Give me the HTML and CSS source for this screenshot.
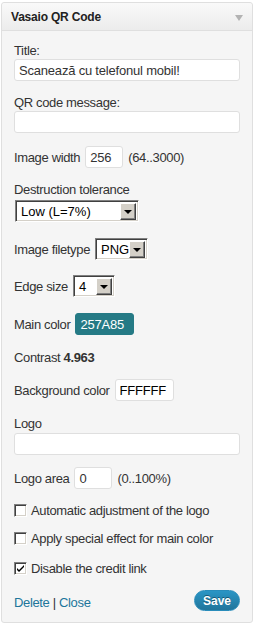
FILE: index.html
```html
<!DOCTYPE html>
<html lang="en">
<head>
    <meta charset="UTF-8">
    <title>Vasaio QR Code widget</title>
    <link rel="stylesheet" href="styles.css">
</head>
<body>
    <div class="widget">
        <div class="widget-top">
            <h3>Vasaio QR Code</h3>
            <span class="toggle"></span>
        </div>

        <div class="widget-inside">
            <div class="field">
                <label class="block">Title:</label>
                <input class="widefat" type="text" value="Scanează cu telefonul mobil!">
            </div>

            <div class="field f-message">
                <label class="block">QR code message:</label>
                <input class="widefat" type="text" value="">
            </div>

            <div class="field inline f-width">
                <label>Image width</label>
                <input class="small" type="text" value="256">
                <span>(64..3000)</span>
            </div>

            <div class="field f-tolerance">
                <label class="block">Destruction tolerance</label>
                <div class="select select-wide">
                    <span class="select-text">Low (L=7%)</span>
                    <span class="select-btn"></span>
                </div>
            </div>

            <div class="field inline f-filetype">
                <label>Image filetype</label>
                <div class="select select-type">
                    <span class="select-text">PNG</span>
                    <span class="select-btn"></span>
                </div>
            </div>

            <div class="field inline f-edge">
                <label>Edge size</label>
                <div class="select select-edge">
                    <span class="select-text">4</span>
                    <span class="select-btn"></span>
                </div>
            </div>

            <div class="field inline f-main">
                <label>Main color</label>
                <input class="color main-color" type="text" value="257A85">
            </div>

            <div class="field f-contrast">
                Contrast <b>4.963</b>
            </div>

            <div class="field inline f-bg">
                <label>Background color</label>
                <input class="color" type="text" value="FFFFFF">
            </div>

            <div class="field f-logo">
                <label class="block logo-label">Logo</label>
                <input class="widefat" type="text" value="">
            </div>

            <div class="field inline f-area">
                <label>Logo area</label>
                <input class="small" type="text" value="0">
                <span>(0..100%)</span>
            </div>

            <div class="check">
                <span class="box"></span>
                Automatic adjustment of the logo
            </div>
            <div class="check">
                <span class="box"></span>
                Apply special effect for main color
            </div>
            <div class="check check-last">
                <span class="box">
                    <svg width="9" height="9" viewBox="0 0 9 9"><path d="M1 4 L3 6 L8 1 L8 3 L3 8 L1 6 Z" fill="#000"/></svg>
                </span>
                Disable the credit link
            </div>

            <div class="widget-control">
                <div class="links">
                    <a href="#">Delete</a> | <a href="#">Close</a>
                </div>
                <button class="button-primary">Save</button>
            </div>
        </div>
    </div>
</body>
</html>
```

FILE: styles.css
```css
* {
    margin: 0;
    padding: 0;
    box-sizing: border-box;
}

body {
    font-family: 'Liberation Sans', Arial, sans-serif;
    font-size: 13px;
    letter-spacing: -0.35px;
    color: #333;
    background: #fff;
    padding: 2px 0 0 1px;
}

.widget {
    width: 252px;
    height: 621px;
    border: 1px solid #dfdfdf;
    border-radius: 3px;
    background: #f5f5f5;
}

.widget-top {
    height: 28px;
    display: flex;
    align-items: center;
    justify-content: space-between;
    padding: 0 9px 0 9px;
    background: linear-gradient(to bottom, #f9f9f9, #ececec);
    border-bottom: 1px solid #dfdfdf;
    border-radius: 3px 3px 0 0;
}

.widget-top h3 {
    font-size: 12px;
    font-weight: bold;
    letter-spacing: -0.2px;
    color: #222;
    margin-top: 1px;
}

.toggle {
    width: 0;
    height: 0;
    border-left: 4px solid transparent;
    border-right: 4px solid transparent;
    border-top: 6px solid #b3b3b3;
    margin-top: 3px;
}

.widget-inside {
    padding: 12px 11px 0 12px;
    display: flex;
    flex-direction: column;
}

/* spacing between the rows of the form */
.field {
    line-height: 15px;
}

.f-message { margin-top: 14px; }
.f-width { margin-top: 13px; }
.f-tolerance { margin-top: 14px; }
.f-filetype { margin-top: 16px; }
.f-edge { margin-top: 15px; }
.f-main { margin-top: 16px; }
.f-contrast { margin-top: 15px; }
.f-bg { margin-top: 14px; }
.f-logo { margin-top: 15px; }
.f-area { margin-top: 12px; }

.field.inline {
    display: flex;
    align-items: center;
    gap: 5px;
}

.block {
    display: block;
    margin-bottom: 1px;
}

input {
    font-family: 'Liberation Sans', Arial, sans-serif;
    font-size: 13px;
    letter-spacing: -0.2px;
    color: #333;
    height: 22px;
    background: #fff;
    border: 1px solid #dfdfdf;
    border-radius: 3px;
    padding: 0 4px;
    outline: none;
}

.widefat {
    display: block;
    width: 226px;
}

.small {
    width: 38px;
}

.color {
    width: 59px;
    color: #000;
}

.main-color {
    background: #257a85;
    border-color: #257a85;
    color: #fff;
}

.select {
    display: flex;
    align-items: center;
    height: 22px;
    background: #fff;
    border-top: 1px solid #808080;
    border-left: 1px solid #808080;
    border-right: 1px solid #fff;
    border-bottom: 1px solid #fff;
    box-shadow: inset 1px 1px 0 #404040, inset -1px -1px 0 #d4d0c8;
    padding: 2px;
    color: #000;
    letter-spacing: 0;
}

.select-text {
    flex: 1;
    padding-left: 3px;
}

.select-btn {
    width: 16px;
    height: 17px;
    background: #d4d0c8;
    border-top: 1px solid #fff;
    border-left: 1px solid #fff;
    border-right: 1px solid #404040;
    border-bottom: 1px solid #404040;
    box-shadow: inset -1px -1px 0 #808080;
    position: relative;
}

.select-btn::after {
    content: '';
    position: absolute;
    left: 3px;
    top: 6px;
    border-left: 4px solid transparent;
    border-right: 4px solid transparent;
    border-top: 4px solid #000;
}

.select-wide {
    width: 124px;
    margin-top: 3px;
    margin-left: 1px;
}

.select-type {
    width: 53px;
}

.select-edge {
    width: 42px;
}

.logo-label {
    margin-bottom: 2px;
}

.check {
    display: flex;
    align-items: center;
    gap: 4px;
    height: 13px;
    margin-top: 15px;
}

.check-last {
    margin-top: 17px;
}

.box {
    width: 13px;
    height: 13px;
    background: #fff;
    border-top: 1px solid #808080;
    border-left: 1px solid #808080;
    border-right: 1px solid #fff;
    border-bottom: 1px solid #fff;
    box-shadow: inset 1px 1px 0 #404040, inset -1px -1px 0 #d4d0c8;
    display: flex;
    align-items: center;
    justify-content: center;
}

.widget-control {
    display: flex;
    justify-content: space-between;
    align-items: center;
    margin-top: 15px;
}

.widget-control a {
    color: #21759b;
    text-decoration: none;
}

.links {
    margin-top: 4px;
}

.button-primary {
    width: 46px;
    height: 21px;
    border-radius: 11px;
    border: 1px solid #298cba;
    background: linear-gradient(to bottom, #2a95c5, #21759b);
    color: #fff;
    font-family: 'Liberation Sans', Arial, sans-serif;
    font-size: 12px;
    font-weight: bold;
    letter-spacing: 0;
    text-shadow: 0 -1px 0 rgba(0, 0, 0, 0.4);
    margin-right: 1px;
}
```
